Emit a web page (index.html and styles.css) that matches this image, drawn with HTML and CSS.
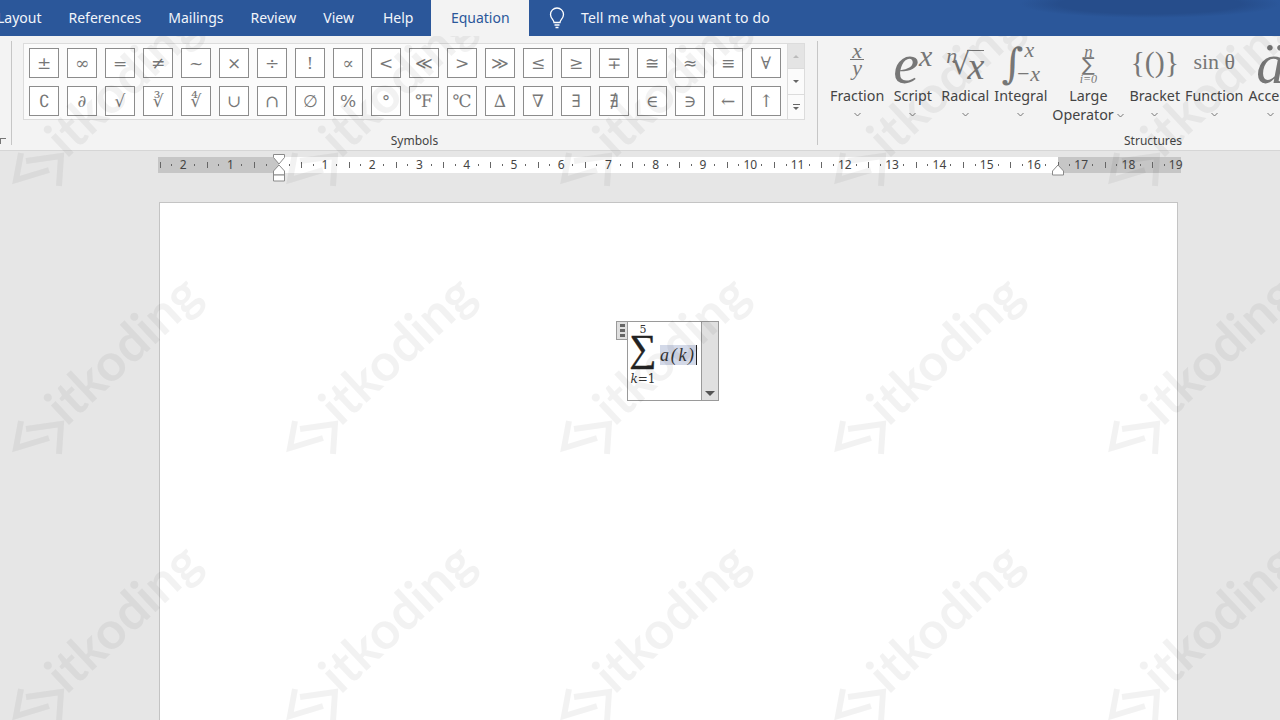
FILE: index.html
```html
<!DOCTYPE html>
<html lang="en">
<head>
  <meta charset="UTF-8">
  <title>Equation - Word</title>
  <link rel="stylesheet" href="styles.css">
</head>
<body>

  <div class="tabs">
    <span class="tab first">Layout</span>
    <span class="tab">References</span>
    <span class="tab">Mailings</span>
    <span class="tab">Review</span>
    <span class="tab">View</span>
    <span class="tab help">Help</span>
    <span class="tab active">Equation</span>
    <svg class="bulb" width="18" height="22" viewBox="0 0 18 22" fill="none" stroke="#fff" stroke-width="1.3">
      <path d="M6 15.5c0-2.5-3.5-4-3.5-8a6.5 6.5 0 0 1 13 0c0 4-3.5 5.500-3.500 8z"/>
      <path d="M6.500 18h5M7.500 20.500h3"/>
    </svg>
    <span class="tell">Tell me what you want to do</span>
  </div>

  <div class="ribbon">
    <div class="stub"><span class="launcher"></span></div>

    <div class="group symbols">
      <div class="gallery">
        <div class="cells">
          <span class="cell">±</span><span class="cell">∞</span><span class="cell">=</span><span class="cell">≠</span><span class="cell">~</span><span class="cell">×</span><span class="cell">÷</span><span class="cell">!</span><span class="cell">∝</span><span class="cell">&lt;</span><span class="cell">≪</span><span class="cell">&gt;</span><span class="cell">≫</span><span class="cell">≤</span><span class="cell">≥</span><span class="cell">∓</span><span class="cell">≅</span><span class="cell">≈</span><span class="cell">≡</span><span class="cell">∀</span>
          <span class="cell">∁</span><span class="cell">∂</span><span class="cell">√</span><span class="cell">∛</span><span class="cell">∜</span><span class="cell">∪</span><span class="cell">∩</span><span class="cell">∅</span><span class="cell">%</span><span class="cell">°</span><span class="cell">℉</span><span class="cell">℃</span><span class="cell">∆</span><span class="cell">∇</span><span class="cell">∃</span><span class="cell">∄</span><span class="cell">∈</span><span class="cell">∋</span><span class="cell">←</span><span class="cell">↑</span>
        </div>
        <div class="scroller">
          <span class="scroll-btn up off"><i class="arrow"></i></span>
          <span class="scroll-btn"><i class="arrow"></i></span>
          <span class="scroll-btn more"><i class="arrow"></i></span>
        </div>
      </div>
      <div class="group-label">Symbols</div>
    </div>

    <div class="group structures">
      <div class="buttons">
        <div class="btn roomy">
          <div class="icon"><span class="frac"><span>x</span><span class="frac-low">y</span></span></div>
          <span class="label">Fraction</span>
          <svg class="chev" width="7" height="5" viewBox="0 0 7 5"><path d="M.5 1l3 3 3-3" fill="none" stroke="#777"/></svg>
        </div>
        <div class="btn roomy">
          <div class="icon"><span class="big-e">e</span><sup class="big-sup">x</sup></div>
          <span class="label">Script</span>
          <svg class="chev" width="7" height="5" viewBox="0 0 7 5"><path d="M.5 1l3 3 3-3" fill="none" stroke="#777"/></svg>
        </div>
        <div class="btn">
          <div class="icon"><sup class="rad-n">n</sup><span class="rad-sign">√</span><span class="rad-x">x</span></div>
          <span class="label">Radical</span>
          <svg class="chev" width="7" height="5" viewBox="0 0 7 5"><path d="M.5 1l3 3 3-3" fill="none" stroke="#777"/></svg>
        </div>
        <div class="btn">
          <div class="icon"><span class="int-sign">∫</span><span class="limits"><span class="limit-top">x</span><span>−x</span></span></div>
          <span class="label">Integral</span>
          <svg class="chev" width="7" height="5" viewBox="0 0 7 5"><path d="M.5 1l3 3 3-3" fill="none" stroke="#777"/></svg>
        </div>
        <div class="btn">
          <div class="icon"><span class="sum-icon"><span class="sum-top">n</span><span class="sum-sign">∑</span><span class="sum-low">i=0</span></span></div>
          <span class="label">Large<br>Operator <svg width="7" height="5" viewBox="0 0 7 5"><path d="M.5 1l3 3 3-3" fill="none" stroke="#777"/></svg></span>
        </div>
        <div class="btn">
          <div class="icon bracket">{()}</div>
          <span class="label">Bracket</span>
          <svg class="chev" width="7" height="5" viewBox="0 0 7 5"><path d="M.5 1l3 3 3-3" fill="none" stroke="#777"/></svg>
        </div>
        <div class="btn">
          <div class="icon func">sin θ</div>
          <span class="label">Function</span>
          <svg class="chev" width="7" height="5" viewBox="0 0 7 5"><path d="M.5 1l3 3 3-3" fill="none" stroke="#777"/></svg>
        </div>
        <div class="btn">
          <div class="icon accent">ä</div>
          <span class="label">Accent</span>
          <svg class="chev" width="7" height="5" viewBox="0 0 7 5"><path d="M.5 1l3 3 3-3" fill="none" stroke="#777"/></svg>
        </div>
      </div>
      <div class="group-label">Structures</div>
    </div>
  </div>

  <div class="ruler-row">
    <div class="ruler">
      <span class="cm">2</span><span class="cm">1</span><span class="cm"></span><span class="cm">1</span><span class="cm">2</span><span class="cm">3</span><span class="cm">4</span><span class="cm">5</span><span class="cm">6</span><span class="cm">7</span><span class="cm">8</span><span class="cm">9</span><span class="cm">10</span><span class="cm">11</span><span class="cm">12</span><span class="cm">13</span><span class="cm">14</span><span class="cm">15</span><span class="cm">16</span><span class="cm">17</span><span class="cm">18</span><span class="cm last">19</span>
      <svg class="marker marker-left" width="14" height="28" viewBox="0 0 14 28" fill="#fff" stroke="#8a8a8a">
        <path d="M1.500.5h11v3L7 10 1.500 3.500z"/>
        <path d="M7 11l5.500 6v4h-11v-4z"/>
        <path d="M1.500 21h11v6h-11z"/>
      </svg>
      <svg class="marker marker-right" width="14" height="12" viewBox="0 0 14 12" fill="#fff" stroke="#8a8a8a">
        <path d="M7 1l5.500 6v4h-11V7z"/>
      </svg>
    </div>
  </div>

  <div class="canvas">
    <div class="page">
      <div class="equation">
        <div class="eq-handle"><i></i><i></i><i></i></div>
        <div class="eq-box">
          <div class="eq-sum">
            <span class="eq-top">5</span>
            <span class="eq-sign">∑</span>
            <span class="eq-low"><i>k</i>=1</span>
          </div>
          <div class="eq-body"><span class="eq-sel">a(k)</span><span class="caret"></span></div>
        </div>
        <div class="eq-side"><i class="eq-arrow"></i></div>
      </div>
    </div>
  </div>

  <div class="marks">
    <div class="mark"><svg viewBox="0 0 60 45"><path d="M15 5L10 32L43 22M20 13L55 8L53 38"/></svg><span>itkoding</span></div>
    <div class="mark"><svg viewBox="0 0 60 45"><path d="M15 5L10 32L43 22M20 13L55 8L53 38"/></svg><span>itkoding</span></div>
    <div class="mark"><svg viewBox="0 0 60 45"><path d="M15 5L10 32L43 22M20 13L55 8L53 38"/></svg><span>itkoding</span></div>
    <div class="mark"><svg viewBox="0 0 60 45"><path d="M15 5L10 32L43 22M20 13L55 8L53 38"/></svg><span>itkoding</span></div>
    <div class="mark"><svg viewBox="0 0 60 45"><path d="M15 5L10 32L43 22M20 13L55 8L53 38"/></svg><span>itkoding</span></div>
    <div class="mark"><svg viewBox="0 0 60 45"><path d="M15 5L10 32L43 22M20 13L55 8L53 38"/></svg><span>itkoding</span></div>
    <div class="mark"><svg viewBox="0 0 60 45"><path d="M15 5L10 32L43 22M20 13L55 8L53 38"/></svg><span>itkoding</span></div>
    <div class="mark"><svg viewBox="0 0 60 45"><path d="M15 5L10 32L43 22M20 13L55 8L53 38"/></svg><span>itkoding</span></div>
    <div class="mark"><svg viewBox="0 0 60 45"><path d="M15 5L10 32L43 22M20 13L55 8L53 38"/></svg><span>itkoding</span></div>
    <div class="mark"><svg viewBox="0 0 60 45"><path d="M15 5L10 32L43 22M20 13L55 8L53 38"/></svg><span>itkoding</span></div>
    <div class="mark"><svg viewBox="0 0 60 45"><path d="M15 5L10 32L43 22M20 13L55 8L53 38"/></svg><span>itkoding</span></div>
    <div class="mark"><svg viewBox="0 0 60 45"><path d="M15 5L10 32L43 22M20 13L55 8L53 38"/></svg><span>itkoding</span></div>
    <div class="mark"><svg viewBox="0 0 60 45"><path d="M15 5L10 32L43 22M20 13L55 8L53 38"/></svg><span>itkoding</span></div>
    <div class="mark"><svg viewBox="0 0 60 45"><path d="M15 5L10 32L43 22M20 13L55 8L53 38"/></svg><span>itkoding</span></div>
    <div class="mark"><svg viewBox="0 0 60 45"><path d="M15 5L10 32L43 22M20 13L55 8L53 38"/></svg><span>itkoding</span></div>
  </div>

</body>
</html>
```

FILE: styles.css
```css
html, body {
  height: 100%;
}

body {
  margin: 0;
  overflow: hidden;
  position: relative;
  display: flex;
  flex-direction: column;
  background-color: #e6e6e6;
  font-family: 'Noto Sans', 'Open Sans', sans-serif;
  color: #444;
}

/* tabs */
.tabs {
  height: 36px;
  flex: none;
  display: flex;
  align-items: center;
  gap: 27px;
  background-color: #2b579a;
  background-image: radial-gradient(ellipse 130px 14px at 1150px 4px, #264d8b 70%, transparent 100%);
  color: #f2f5fa;
  font-size: 14px;
}

.tab, .tell {
  padding-bottom: 2px;
}

.tab.first {
  margin-left: -3px;
}

.tab.help {
  margin-left: 2px;
}

.tab.active {
  align-self: stretch;
  display: flex;
  align-items: center;
  padding: 0 19.5px 2px;
  margin-left: -9px;
  background-color: #f3f3f3;
  color: #2b579a;
}

.bulb {
  flex: none;
  margin-left: -8px;
}

.tell {
  margin-left: -12px;
  letter-spacing: 0.15px;
}

/* ribbon */
.ribbon {
  height: 114px;
  flex: none;
  display: flex;
  background-color: #f3f3f3;
  border-bottom: 1px solid #d6d6d6;
}

.stub {
  width: 11px;
  margin: 5px 0;
  border-right: 1px solid #c6c6c6;
  display: flex;
  align-items: flex-end;
}

.launcher {
  width: 6px;
  height: 6px;
  margin-bottom: 1px;
  border-left: 1px solid #777;
  border-top: 1px solid #777;
  box-sizing: border-box;
}

.group {
  display: flex;
  flex-direction: column;
  padding-top: 5px;
}

.symbols {
  width: 806px;
  margin: 5px 0;
  padding: 2px 0 0 11px;
  box-sizing: border-box;
  border-right: 1px solid #c6c6c6;
}

.structures {
  flex: 1;
  min-width: 0;
}

.group-label {
  margin-top: auto;
  height: 19px;
  font-size: 12px;
  line-height: 17px;
  text-align: center;
  color: #444;
}

.symbols .group-label {
  padding-right: 11px;
  margin-bottom: -6px;
}

.structures .group-label {
  padding-left: 306px;
  margin-bottom: -1px;
  text-align: left;
}

/* symbol gallery */
.gallery {
  width: 782px;
  height: 77px;
  display: flex;
  background-color: #fbfbfb;
  border: 1px solid #dcdcdc;
  box-sizing: border-box;
}

.cells {
  width: 763px;
  padding: 4px 0 0 5px;
  box-sizing: border-box;
  display: grid;
  grid-template-columns: repeat(20, 30px);
  grid-auto-rows: 30px;
  gap: 8px;
}

.cell {
  display: flex;
  align-items: center;
  justify-content: center;
  border: 1px solid #8c8c8c;
  background-color: #fff;
  font-family: 'DejaVu Serif', 'Liberation Serif', serif;
  font-size: 17px;
  color: #777;
}

.scroller {
  flex: 1;
  display: flex;
  flex-direction: column;
  border-left: 1px solid #dcdcdc;
}

.scroll-btn {
  flex: 1;
  display: flex;
  align-items: center;
  justify-content: center;
  border-bottom: 1px solid #dcdcdc;
}

.scroll-btn:last-child {
  border-bottom: none;
}

.scroll-btn.off {
  background-color: #e4e4e4;
}

.arrow {
  width: 0;
  height: 0;
  border-left: 3px solid transparent;
  border-right: 3px solid transparent;
  border-top: 3px solid #666;
}

.up .arrow {
  border-top: none;
  border-bottom: 3px solid #bbb;
}

.more {
  flex-direction: column;
  gap: 2px;
}

.more::before {
  content: '';
  width: 7px;
  height: 1px;
  background-color: #666;
}

/* structure buttons */
.buttons {
  display: flex;
  gap: 5px;
  padding-left: 12px;
}

.btn {
  flex: none;
  display: flex;
  flex-direction: column;
  align-items: center;
  font-size: 14.3px;
  color: #444;
}

.btn.roomy {
  padding-right: 4px;
}

.label {
  line-height: 19px;
  text-align: center;
  white-space: nowrap;
}

.label svg {
  vertical-align: 2px;
}

.chev {
  margin-top: 7px;
}

.icon {
  height: 45px;
  box-sizing: border-box;
  display: flex;
  align-items: center;
  justify-content: center;
  font-family: 'Liberation Serif', serif;
  font-style: italic;
  color: #777;
  white-space: nowrap;
}

.frac {
  display: flex;
  flex-direction: column;
  align-items: center;
  font-size: 22px;
  line-height: 16px;
  margin-bottom: 8px;
}

.frac-low {
  border-top: 1px solid #777;
  padding: 0 2px;
}

.big-e {
  font-size: 58px;
  line-height: 46px;
}

.big-sup {
  font-size: 30px;
  line-height: 30px;
  align-self: flex-start;
}

.rad-n {
  font-size: 22px;
  line-height: 20px;
  align-self: flex-start;
  margin-top: 5px;
  margin-right: -6px;
}

.rad-sign {
  font-size: 30px;
  font-style: normal;
  font-family: 'DejaVu Sans', sans-serif;
}

.rad-x {
  font-size: 38px;
  line-height: 30px;
  border-top: 1px solid #777;
  margin-left: -3px;
  margin-top: 3px;
}

.int-sign {
  font-size: 42px;
  font-family: 'DejaVu Serif', serif;
  font-style: normal;
}

.limits {
  display: flex;
  flex-direction: column;
  font-size: 22px;
  line-height: 24px;
  margin-left: -8px;
  margin-bottom: 4px;
}

.limit-top {
  margin-left: 9px;
}

.sum-icon {
  display: flex;
  flex-direction: column;
  align-items: center;
  line-height: 1;
}

.sum-top {
  font-size: 17px;
  height: 12px;
}

.sum-sign {
  font-style: normal;
  font-family: 'DejaVu Sans', sans-serif;
  font-size: 19px;
  height: 18px;
  line-height: 18px;
}

.sum-low {
  font-size: 12px;
}

.bracket {
  font-style: normal;
  font-size: 30px;
  padding-bottom: 4px;
}

.func {
  font-style: normal;
  font-size: 22px;
  padding-bottom: 4px;
}

.accent {
  font-size: 58px;
}

/* ruler */
.ruler-row {
  height: 51px;
  flex: none;
  padding: 6px 0 0 158px;
  box-sizing: border-box;
}

.ruler {
  width: 1023px;
  height: 16px;
  padding-left: 1.5px;
  box-sizing: border-box;
  position: relative;
  display: flex;
  background: linear-gradient(to right, #c6c6c6 121px, #fff 121px, #fff 900px, #c6c6c6 900px);
}

.cm {
  flex: 0 0 47.27px;
  font-size: 12px;
  line-height: 16px;
  text-align: center;
  color: #444;
  background:
    linear-gradient(#666, #666) 0 50% / 1px 6px no-repeat,
    linear-gradient(#666, #666) 25% 50% / 1px 2px no-repeat,
    linear-gradient(#666, #666) 75% 50% / 1px 2px no-repeat;
}

.cm.last {
  background:
    linear-gradient(#666, #666) 0 50% / 1px 6px no-repeat,
    linear-gradient(#666, #666) 25% 50% / 1px 2px no-repeat;
}

.marker {
  position: absolute;
}

.marker-left {
  left: 114px;
  top: -3px;
}

.marker-right {
  left: 893px;
  top: 7px;
}

/* document */
.canvas {
  flex: 1;
  padding-left: 159px;
  min-height: 0;
}

.page {
  width: 1019px;
  height: 100%;
  box-sizing: border-box;
  background-color: #fff;
  border: 1px solid #c4c4c4;
  border-bottom: none;
  padding: 118px 0 0 456px;
}

.equation {
  display: flex;
  align-items: flex-start;
}

.eq-handle {
  width: 11px;
  height: 19px;
  box-sizing: border-box;
  display: flex;
  flex-direction: column;
  align-items: center;
  justify-content: center;
  gap: 2px;
  background-color: #dfdfdf;
  border: 1px solid #9a9a9a;
  border-right: none;
}

.eq-handle i {
  width: 5px;
  height: 3px;
  background-color: #666;
}

.eq-box {
  width: 74px;
  height: 80px;
  box-sizing: border-box;
  display: flex;
  align-items: flex-start;
  padding: 2px 0 0 1px;
  border: 1px solid #9a9a9a;
  border-right: none;
  font-family: 'DejaVu Serif', 'Liberation Serif', serif;
  color: #333;
}

.eq-sum {
  width: 28px;
  display: flex;
  flex-direction: column;
  align-items: center;
  line-height: 1;
}

.eq-top {
  font-size: 11px;
  height: 11px;
}

.eq-sign {
  font-size: 38px;
  line-height: 38px;
  height: 38px;
  margin-top: -6px;
  font-family: 'Liberation Serif', serif;
  color: #222;
  -webkit-text-stroke: 0.5px #222;
}

.eq-low {
  font-size: 12px;
  margin-top: 6px;
  white-space: nowrap;
}

.eq-body {
  display: flex;
  align-items: center;
  margin-left: 3px;
  margin-top: 21px;
}

.eq-sel {
  font-size: 18px;
  font-family: 'Liberation Serif', serif;
  font-style: italic;
  letter-spacing: 1.7px;
  line-height: 20px;
  background-color: #d3d9e8;
}

.caret {
  width: 1px;
  height: 20px;
  background-color: #222;
}

.eq-side {
  width: 18px;
  height: 80px;
  box-sizing: border-box;
  display: flex;
  align-items: flex-end;
  justify-content: center;
  padding-bottom: 4px;
  background-color: #e0e0e0;
  border: 1px solid #9a9a9a;
}

.eq-arrow {
  width: 0;
  height: 0;
  border-left: 5px solid transparent;
  border-right: 5px solid transparent;
  border-top: 5px solid #555;
}

/* watermark lying over the whole window */
.marks {
  position: absolute;
  top: 36px;
  left: 0;
  right: 0;
  bottom: 0;
  overflow: hidden;
  pointer-events: none;
  display: grid;
  grid-template-columns: repeat(5, 274px);
  grid-auto-rows: 268px;
}

.mark {
  align-self: center;
  margin-left: 6px;
  display: flex;
  align-items: center;
  transform: rotate(-43deg);
  transform-origin: 30px 50%;
  font-family: 'Lato', sans-serif;
  font-weight: 700;
  font-size: 52px;
  line-height: 50px;
  color: rgba(0, 0, 0, 0.05);
}

.mark span {
  margin-top: -16px;
}

.mark svg {
  width: 60px;
  height: 45px;
  flex: none;
  fill: none;
  stroke: rgba(0, 0, 0, 0.05);
  stroke-width: 6;
  transform: rotate(43deg);
}
```
